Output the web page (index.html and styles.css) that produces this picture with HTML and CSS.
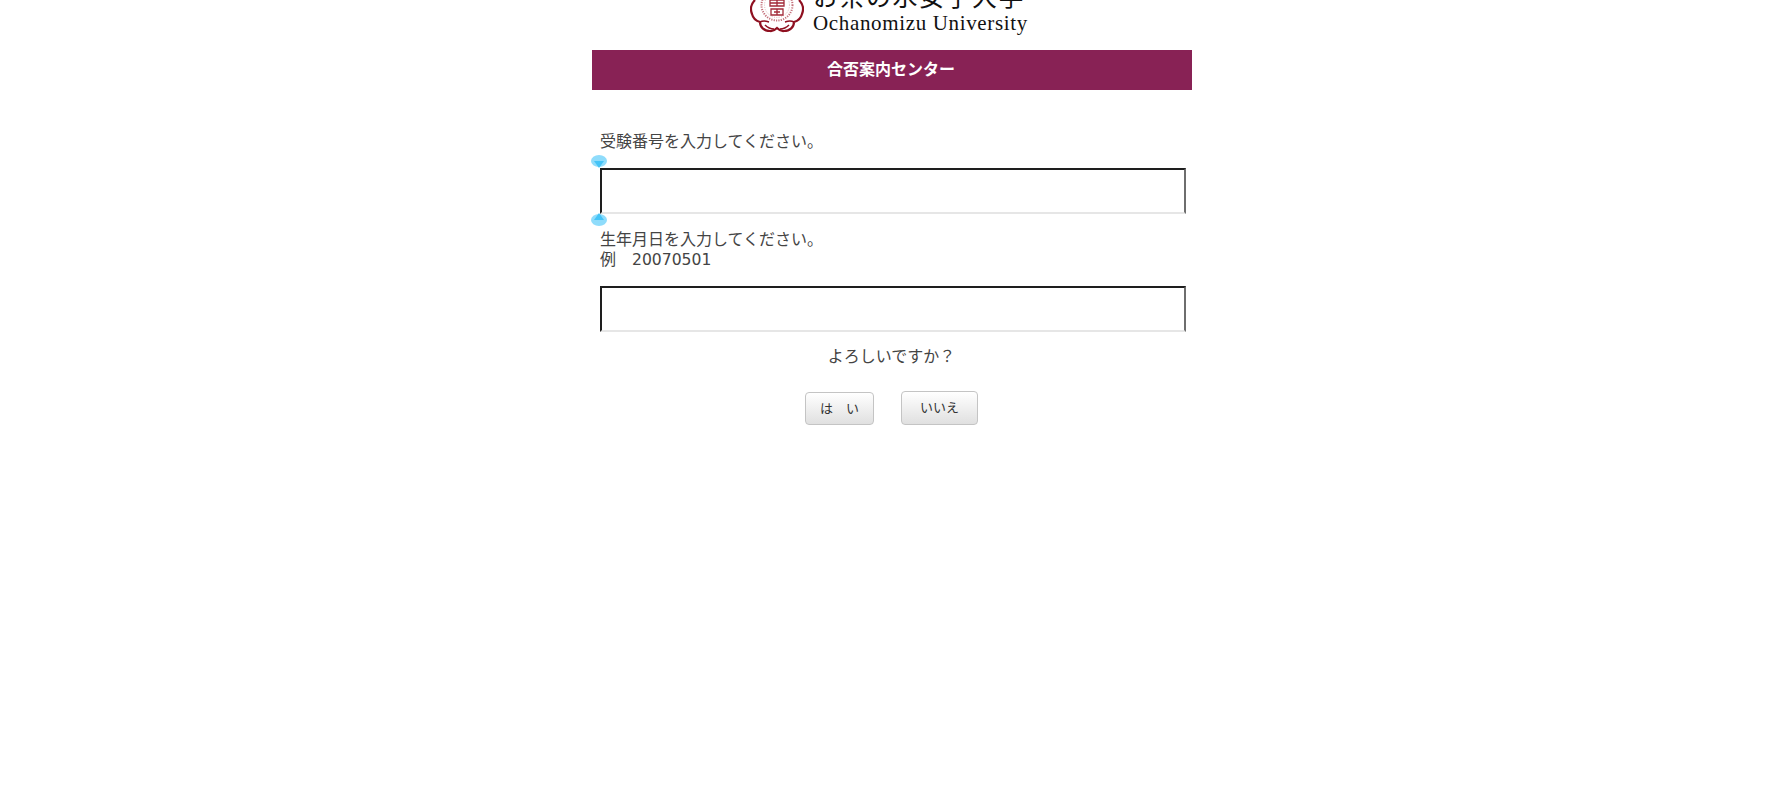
FILE: index.html

```html
<!DOCTYPE html>
<html lang="ja">
<head>
    <meta charset="UTF-8">
    <title>合否案内センター</title>
    <link rel="stylesheet" href="styles.css">
</head>
<body>

<div class="wrapper">
    <div class="logo">
        <svg class="logo-mark" width="54" height="33" viewBox="0 0 54 33">
            <!-- outer petals -->
            <path d="M5 0 C1 4 0 9 2 14 C3 18 6 21 10 22 C10 27 14 31 20 31 C23 31.5 25 30 27 28 C29 30 31 31.5 34 31 C40 31 44 27 44 22 C48 21 51 18 52 14 C54 9 53 4 49 0" fill="none" stroke="#8f1020" stroke-width="2.2"/>
            <path d="M10 22 C14 20 16 21 19 22 M44 22 C40 20 38 21 35 22 M15 25 C18 28 21 29 24 29 M39 25 C36 28 33 29 30 29" fill="none" stroke="#8f1020" stroke-width="1.6"/>
            <!-- dotted ring and crest -->
            <circle cx="27" cy="5" r="15.5" fill="#fff" stroke="#c4727c" stroke-width="2" stroke-dasharray="1.2 1.2"/>
            <circle cx="27" cy="5" r="12.5" fill="none" stroke="#e2b4b8" stroke-width="1" stroke-dasharray="1 1.4"/>
            <path d="M20 0 H34 V6 H20 Z M27 0 V6 M20 3 H34" fill="none" stroke="#a32a38" stroke-width="1.3"/>
            <path d="M21 9 H33 V15 H21 Z M24 12 H30 M27 9 V15" fill="none" stroke="#a32a38" stroke-width="1.3"/>
        </svg>
        <div class="logo-text">
            <div class="logo-ja">お茶の水女子大学</div>
            <div class="logo-en">Ochanomizu University</div>
        </div>
    </div>

    <h1 class="title">合否案内センター</h1>

    <div class="form">
        <p class="label first">受験番号を入力してください。</p>
        <div class="field">
            <span class="handle handle-top"></span>
            <input type="text" class="box">
            <span class="handle handle-bottom"></span>
        </div>
        <p class="label second-label">生年月日を入力してください。<br>例　<span class="sample">20070501</span></p>
        <div class="field second">
            <input type="text" class="box">
        </div>
        <p class="confirm">よろしいですか？</p>
        <div class="buttons">
            <button class="btn btn-yes">は　い</button>
            <button class="btn btn-no">いいえ</button>
        </div>
    </div>
</div>

</body>
</html>
```

FILE: styles.css

```css
html, body {
    margin: 0;
    padding: 0;
    background-color: #ffffff;
    overflow: hidden;
}
body {
    height: 786px;
    font-family: "DejaVu Sans", "Noto Sans CJK JP", sans-serif;
    font-size: 16px;
    color: #444444;
}
.wrapper {
    width: 600px;
    margin-left: 592px;
}
.logo {
    height: 50px;
    display: flex;
    overflow: hidden;
    padding-left: 158px;
}
.logo-mark {
    flex-shrink: 0;
    margin-right: 9px;
}
.logo-text {
    margin-top: -17px;
    color: #111111;
    font-family: "Liberation Serif", "Noto Sans CJK JP", serif;
}
.logo-ja {
    font-size: 25px;
    line-height: 30px;
    letter-spacing: 1.5px;
}
.logo-en {
    font-size: 21px;
    line-height: 20px;
    letter-spacing: 0.65px;
}
.title {
    margin: 0;
    height: 40px;
    line-height: 37px;
    background-color: #882255;
    color: #ffffff;
    font-size: 16px;
    font-weight: bold;
    text-align: center;
    padding-right: 2px;
    box-sizing: border-box;
    font-family: "Noto Sans CJK JP", sans-serif;
}
.form {
    padding: 0 9px 0 8px;
}
.label {
    margin: 0;
    line-height: 20px;
}
.label.first {
    padding-top: 42px;
}
.second-label {
    padding-top: 16px;
}
.sample {
    font-size: 15.6px;
}
.field {
    position: relative;
    height: 46px;
    margin-top: 16px;
}
.field.second {
    margin-top: 16px;
}
.box {
    display: block;
    box-sizing: border-box;
    width: 586px;
    height: 46px;
    padding: 0;
    background: #ffffff;
    border-style: solid;
    border-width: 2px;
    border-color: #1e1e1e #6e6e6e #e6e6e6 #1e1e1e;
    outline: none;
}
.handle {
    position: absolute;
    left: -9px;
    width: 16px;
    height: 12px;
    border-radius: 50%;
    background: #8fdcfb;
}
.handle::after {
    content: "";
    position: absolute;
    left: 3px;
    width: 10px;
    height: 7px;
    background: #45c4f7;
}
.handle-top {
    top: -13px;
}
.handle-top::after {
    top: 6px;
    clip-path: polygon(0 0, 100% 0, 50% 100%);
}
.handle-bottom {
    bottom: -12px;
}
.handle-bottom::after {
    bottom: 6px;
    clip-path: polygon(50% 0, 100% 100%, 0 100%);
}
.confirm {
    margin: 13px 0 0;
    line-height: 24px;
    text-align: center;
}
.buttons {
    display: flex;
    justify-content: center;
    align-items: flex-end;
    gap: 27px;
    margin-top: 22px;
}
.btn {
    padding: 0 0 3px;
    border: 1px solid #c4c4c4;
    border-radius: 4px;
    background: linear-gradient(#ffffff, #e0e0e0);
    color: #333333;
    font-size: 13px;
    font-family: "Noto Sans CJK JP", sans-serif;
}
.btn-yes {
    width: 69px;
    height: 33px;
}
.btn-no {
    width: 77px;
    height: 34px;
}
```
